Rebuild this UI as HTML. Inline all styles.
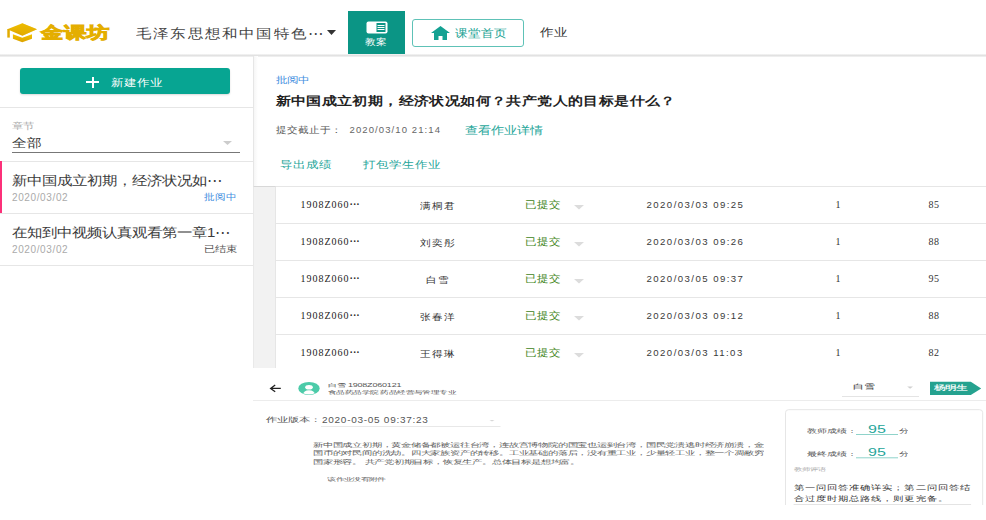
<!DOCTYPE html>
<html><head><meta charset="utf-8">
<style>
*{margin:0;padding:0;box-sizing:border-box}
html,body{width:986px;height:520px;overflow:hidden;background:#fff;font-family:"Liberation Sans",sans-serif;color:#333}
.a{position:absolute;white-space:nowrap;line-height:1}
.hline{position:absolute;height:1px;background:#e6e6e6}
.sq{transform-origin:0 0}
.vline{position:absolute;width:1px;background:#e6e6e6}
</style></head><body>

<!-- HEADER -->
<div class="hline" style="left:0;top:54px;width:986px;height:3px;background:linear-gradient(#f6f6f6,#e2e2e2 50%,#f4f4f4)"></div>
<svg class="a" style="left:0;top:0" width="40" height="50" viewBox="0 0 40 50">
  <defs><linearGradient id="g1" x1="0" y1="0" x2="0" y2="1"><stop offset="0" stop-color="#f2c200"/><stop offset="1" stop-color="#dca200"/></linearGradient></defs>
  <path d="M7.3 29.3 L22.3 23.3 L37 29.3 L22.3 35.8 Z" fill="url(#g1)"/>
  <path d="M22.3 23.3 L37 29.3 L22.3 35.8 L17 28 Z" fill="#e8b400" opacity="0.5"/>
  <rect x="7.3" y="29" width="2.5" height="8.6" fill="#e2ab00"/>
  <path d="M12.9 34.2 L22.3 37.8 L32 34.2 L32 38.7 L22.3 42.2 L12.9 38.7 Z" fill="url(#g1)"/>
</svg>
<div class="a sq" style="left:40.5px;top:24.5px;font-size:22px;font-weight:900;color:#e4ae00;letter-spacing:1.4px;transform:scaleY(0.72);-webkit-text-stroke:1.4px #e4ae00">金课坊</div>
<div class="a sq" style="left:136px;top:26.5px;font-size:15px;color:#444;letter-spacing:2.2px;transform:scaleY(0.84)">毛泽东思想和中国特色⋯</div>
<svg class="a" style="left:327px;top:30px" width="10" height="6"><path d="M0 0 L9 0 L4.5 5 Z" fill="#333"/></svg>

<div class="a" style="left:348px;top:11px;width:57px;height:43px;background:#0b9585"></div>
<svg class="a" style="left:366px;top:21px" width="22" height="13" viewBox="0 0 22 13">
  <rect x="0.5" y="0.5" width="21" height="12" rx="2" fill="#fff"/>
  <rect x="10.5" y="2" width="9" height="9" fill="#0b9585"/>
  <rect x="11.5" y="4" width="7" height="1" fill="#fff"/>
  <rect x="11.5" y="6" width="7" height="1" fill="#fff"/>
  <rect x="11.5" y="8" width="7" height="1" fill="#fff"/>
</svg>
<div class="a sq" style="left:365px;top:36.8px;font-size:11px;color:#fff;transform:scaleY(0.85)">教案</div>

<div class="a" style="left:412px;top:19px;width:112px;height:28px;border:1.5px solid #5ec2b7;border-radius:3px"></div>
<svg class="a" style="left:431px;top:26px" width="19" height="14" viewBox="0 0 19 14">
  <path d="M9.5 0 L19 7 L16 7 L16 14 L11.5 14 L11.5 10 L7.5 10 L7.5 14 L3 14 L3 7 L0 7 Z" fill="#14a192"/>
</svg>
<div class="a sq" style="left:455px;top:26.5px;font-size:13px;color:#14a192;transform:scaleY(0.87)">课堂首页</div>
<div class="a sq" style="left:539.5px;top:26px;font-size:14px;color:#333;transform:scaleY(0.82)">作业</div>

<!-- SIDEBAR -->
<div class="vline" style="left:253px;top:56px;height:312px;background:#e6e6e6"></div><div class="a" style="left:254px;top:56px;width:4px;height:130px;background:linear-gradient(90deg,#f6f6f6,#fff)"></div>
<div class="a" style="left:20px;top:68px;width:210px;height:26px;background:#07a592;border-radius:3px;box-shadow:0 1px 2px rgba(0,0,0,.15)"></div>
<div class="a" style="left:86px;top:81px;width:13px;height:2px;background:#fff"></div>
<div class="a" style="left:91.5px;top:76.5px;width:2px;height:11px;background:#fff"></div>
<div class="a sq" style="left:111px;top:77px;font-size:13px;color:#fff;transform:scaleY(0.8)">新建作业</div>
<div class="hline" style="left:0;top:107px;width:253px"></div>

<div class="a sq" style="left:12px;top:122px;font-size:11px;color:#aaa;transform:scaleY(0.78)">章节</div>
<div class="a sq" style="left:12px;top:135.5px;font-size:15px;color:#333;transform:scaleY(0.82)">全部</div>
<div class="a" style="left:12px;top:152px;width:228px;height:1px;background:#777"></div>
<svg class="a" style="left:223px;top:141px" width="9" height="4"><path d="M0 0 L9 0 L4.5 4 Z" fill="#ccc"/></svg>
<div class="hline" style="left:0;top:161px;width:253px"></div>

<div class="a" style="left:0;top:161px;width:2px;height:52px;background:#fc3079"></div>
<div class="a sq" style="left:12px;top:173.5px;font-size:15px;color:#3a3a3a;letter-spacing:0px;transform:scaleY(0.84)">新中国成立初期，经济状况如⋯</div>
<div class="a" style="left:12px;top:192.5px;font-size:10px;color:#aaa;letter-spacing:0.62px">2020/03/02</div>
<div class="a sq" style="left:204px;top:191.5px;font-size:11px;color:#3f8ee0;transform:scaleY(0.85)">批阅中</div>
<div class="hline" style="left:0;top:213px;width:253px"></div>

<div class="a sq" style="left:12px;top:225.5px;font-size:15px;color:#3a3a3a;letter-spacing:0px;transform:scaleY(0.84)">在知到中视频认真观看第一章1⋯</div>
<div class="a" style="left:12px;top:244.5px;font-size:10px;color:#aaa;letter-spacing:0.62px">2020/03/02</div>
<div class="a sq" style="left:204px;top:244.5px;font-size:11px;color:#555;transform:scaleY(0.8)">已结束</div>
<div class="hline" style="left:0;top:265px;width:253px"></div>

<!-- MAIN -->
<div class="a sq" style="left:275.5px;top:76px;font-size:11px;color:#3f8ee0;transform:scaleY(0.78)">批阅中</div>
<div class="a sq" style="left:275.5px;top:94.5px;font-size:15px;font-weight:bold;color:#222;letter-spacing:0.4px;transform:scaleY(0.8)">新中国成立初期，经济状况如何？共产党人的目标是什么？</div>
<div class="a sq" style="left:275.5px;top:124.8px;font-size:11px;color:#555;transform:scaleY(0.85)">提交截止于：</div>
<div class="a" style="left:349.5px;top:124.5px;font-size:9.5px;color:#666;letter-spacing:1.1px">2020/03/10 21:14</div>
<div class="a sq" style="left:465px;top:124.8px;font-size:13px;color:#26a69a;transform:scaleY(0.84)">查看作业详情</div>
<div class="a sq" style="left:279.5px;top:159.2px;font-size:13px;color:#26a69a;transform:scaleY(0.8)">导出成绩</div>
<div class="a sq" style="left:363px;top:159.2px;font-size:13px;color:#26a69a;transform:scaleY(0.8)">打包学生作业</div>

<div class="a" style="left:253px;top:185.5px;width:23px;height:182.5px;background:#f2f2f2;border-right:1px solid #e6e6e6;border-top:1px solid #d8d8d8;border-left:1px solid #e9e9e9"></div>
<div class="hline" style="left:276px;top:186px;width:710px"></div>
<div class="a" style="left:300.5px;top:200px;font-size:10px;color:#222;font-family:'Liberation Serif',serif;letter-spacing:1px">1908Z060<b style="letter-spacing:0">···</b></div>
<div class="a sq" style="left:398px;top:200.5px;width:80px;text-align:center;font-size:11px;color:#333;letter-spacing:1px;transform:scaleY(0.85)">满桐君</div>
<div class="a sq" style="left:525px;top:200px;font-size:11px;color:#3f8519;letter-spacing:0.8px;transform:scaleY(0.87)">已提交</div>
<svg class="a" style="left:573.5px;top:204.5px" width="10" height="5"><path d="M0 0 L10 0 L5 4.5 Z" fill="#dcdcdc"/></svg>
<div class="a" style="left:646.5px;top:200px;font-size:9.6px;color:#3a3a3a;letter-spacing:1.45px">2020/03/03 09:25</div>
<div class="a" style="left:835.5px;top:200px;font-size:10px;color:#333;font-family:'Liberation Serif',serif">1</div>
<div class="a" style="left:928.5px;top:200px;font-size:10px;color:#333;font-family:'Liberation Serif',serif;letter-spacing:0.5px">85</div>
<div class="hline" style="left:276px;top:223px;width:710px"></div>
<div class="a" style="left:300.5px;top:237px;font-size:10px;color:#222;font-family:'Liberation Serif',serif;letter-spacing:1px">1908Z060<b style="letter-spacing:0">···</b></div>
<div class="a sq" style="left:398px;top:237.5px;width:80px;text-align:center;font-size:11px;color:#333;letter-spacing:1px;transform:scaleY(0.85)">刘奕彤</div>
<div class="a sq" style="left:525px;top:237px;font-size:11px;color:#3f8519;letter-spacing:0.8px;transform:scaleY(0.87)">已提交</div>
<svg class="a" style="left:573.5px;top:241.5px" width="10" height="5"><path d="M0 0 L10 0 L5 4.5 Z" fill="#dcdcdc"/></svg>
<div class="a" style="left:646.5px;top:237px;font-size:9.6px;color:#3a3a3a;letter-spacing:1.45px">2020/03/03 09:26</div>
<div class="a" style="left:835.5px;top:237px;font-size:10px;color:#333;font-family:'Liberation Serif',serif">1</div>
<div class="a" style="left:928.5px;top:237px;font-size:10px;color:#333;font-family:'Liberation Serif',serif;letter-spacing:0.5px">88</div>
<div class="hline" style="left:276px;top:260px;width:710px"></div>
<div class="a" style="left:300.5px;top:274px;font-size:10px;color:#222;font-family:'Liberation Serif',serif;letter-spacing:1px">1908Z060<b style="letter-spacing:0">···</b></div>
<div class="a sq" style="left:398px;top:274.5px;width:80px;text-align:center;font-size:11px;color:#333;letter-spacing:1px;transform:scaleY(0.85)">白雪</div>
<div class="a sq" style="left:525px;top:274px;font-size:11px;color:#3f8519;letter-spacing:0.8px;transform:scaleY(0.87)">已提交</div>
<svg class="a" style="left:573.5px;top:278.5px" width="10" height="5"><path d="M0 0 L10 0 L5 4.5 Z" fill="#dcdcdc"/></svg>
<div class="a" style="left:646.5px;top:274px;font-size:9.6px;color:#3a3a3a;letter-spacing:1.45px">2020/03/05 09:37</div>
<div class="a" style="left:835.5px;top:274px;font-size:10px;color:#333;font-family:'Liberation Serif',serif">1</div>
<div class="a" style="left:928.5px;top:274px;font-size:10px;color:#333;font-family:'Liberation Serif',serif;letter-spacing:0.5px">95</div>
<div class="hline" style="left:276px;top:297px;width:710px"></div>
<div class="a" style="left:300.5px;top:311px;font-size:10px;color:#222;font-family:'Liberation Serif',serif;letter-spacing:1px">1908Z060<b style="letter-spacing:0">···</b></div>
<div class="a sq" style="left:398px;top:311.5px;width:80px;text-align:center;font-size:11px;color:#333;letter-spacing:1px;transform:scaleY(0.85)">张春洋</div>
<div class="a sq" style="left:525px;top:311px;font-size:11px;color:#3f8519;letter-spacing:0.8px;transform:scaleY(0.87)">已提交</div>
<svg class="a" style="left:573.5px;top:315.5px" width="10" height="5"><path d="M0 0 L10 0 L5 4.5 Z" fill="#dcdcdc"/></svg>
<div class="a" style="left:646.5px;top:311px;font-size:9.6px;color:#3a3a3a;letter-spacing:1.45px">2020/03/03 09:12</div>
<div class="a" style="left:835.5px;top:311px;font-size:10px;color:#333;font-family:'Liberation Serif',serif">1</div>
<div class="a" style="left:928.5px;top:311px;font-size:10px;color:#333;font-family:'Liberation Serif',serif;letter-spacing:0.5px">88</div>
<div class="hline" style="left:276px;top:334px;width:710px"></div>
<div class="a" style="left:300.5px;top:348px;font-size:10px;color:#222;font-family:'Liberation Serif',serif;letter-spacing:1px">1908Z060<b style="letter-spacing:0">···</b></div>
<div class="a sq" style="left:398px;top:348.5px;width:80px;text-align:center;font-size:11px;color:#333;letter-spacing:1px;transform:scaleY(0.85)">王得琳</div>
<div class="a sq" style="left:525px;top:348px;font-size:11px;color:#3f8519;letter-spacing:0.8px;transform:scaleY(0.87)">已提交</div>
<svg class="a" style="left:573.5px;top:352.5px" width="10" height="5"><path d="M0 0 L10 0 L5 4.5 Z" fill="#dcdcdc"/></svg>
<div class="a" style="left:646.5px;top:348px;font-size:9.6px;color:#3a3a3a;letter-spacing:1.45px">2020/03/03 11:03</div>
<div class="a" style="left:835.5px;top:348px;font-size:10px;color:#333;font-family:'Liberation Serif',serif">1</div>
<div class="a" style="left:928.5px;top:348px;font-size:10px;color:#333;font-family:'Liberation Serif',serif;letter-spacing:0.5px">82</div>

<!-- BOTTOM PANEL -->
<div class="a" style="left:253px;top:368px;width:733px;height:152px;background:#fff"></div>
<svg class="a" style="left:0;top:0" width="986" height="520">
  <path d="M280.8 388.4 L270.6 388.4 M275.2 384.9 L270.6 388.4 L275.2 391.8" stroke="#222" stroke-width="1.3" fill="none"/>
  <ellipse cx="309" cy="388.4" rx="10.7" ry="6.5" fill="#4ccba9"/>
  <clipPath id="av"><ellipse cx="309" cy="388.4" rx="10" ry="6"/></clipPath>
  <g clip-path="url(#av)" fill="#fff">
    <ellipse cx="309" cy="387.3" rx="3.8" ry="2.3"/>
    <path d="M302.5 396 Q303 390.2 309 390.2 Q315 390.2 315.5 396 Z"/>
  </g>
  <rect x="253" y="400" width="733" height="1" fill="#ececec"/>
  <rect x="842" y="396" width="77" height="1" fill="#e4e4e4"/>
  <path d="M907.2 386.6 L913 386.6 L910.1 388.8 Z" fill="#d0d0d0"/>
  <path d="M930 381.8 L970.8 381.8 L981.2 388.4 L970.8 395 L930 395 Z" fill="#25a28f"/>
  <rect x="321" y="426" width="179.5" height="1" fill="#e8e8e8"/>
  <path d="M489.5 420 L494.5 420 L492 421.6 Z" fill="#d8d8d8"/>
  <path d="M785.5 505 L785.5 412.7 Q785.5 409.7 788.5 409.7 L979.7 409.7 Q982.7 409.7 982.7 412.7 L982.7 505" stroke="#e6e6e6" stroke-width="1" fill="none"/>
  <rect x="856" y="434" width="42" height="1" fill="#8fd3ca"/>
  <rect x="856" y="457.3" width="42" height="1" fill="#8fd3ca"/>
  <rect x="793.6" y="504" width="177.5" height="1" fill="#e4e4e4"/>
</svg>
<div class="a sq" style="left:328px;top:383px;font-size:9px;letter-spacing:-0.2px;color:#555;transform:scaleY(0.55)">白雪 1908Z060121</div>
<div class="a sq" style="left:328px;top:389.6px;font-size:9px;letter-spacing:-0.6px;color:#555;transform:scaleY(0.58)">食品药品学院 药品经营与管理专业</div>
<div class="a sq" style="left:852.5px;top:383px;font-size:11px;color:#333;transform:scaleY(0.64)">白雪</div>
<div class="a sq" style="left:934px;top:385px;font-size:11px;color:#fff;-webkit-text-stroke:0.25px #fff;transform:scaleY(0.6)">杨明生</div>
<div class="a sq" style="left:265.5px;top:416.3px;font-size:11.2px;color:#555;transform:scaleY(0.62)">作业版本：</div>
<div class="a sq" style="left:322px;top:414.8px;font-size:10px;color:#555;letter-spacing:0.72px;transform:scaleY(0.95)">2020-03-05 09:37:23</div>
<div class="a sq" style="left:313px;top:441.5px;font-size:10px;letter-spacing:-0.21px;color:#5a5a5a;transform:scaleY(0.58)">新中国成立初期，黄金储备都被运往台湾，连故宫博物院的国宝也运到台湾，国民党溃逃时经济崩溃，金</div>
<div class="a sq" style="left:313px;top:450.2px;font-size:10px;letter-spacing:-0.21px;color:#5a5a5a;transform:scaleY(0.58)">国币的对民间的洗劫。四大家族资产的转移。工业基础的落后，没有重工业，少量轻工业，整一个凋敝穷</div>
<div class="a sq" style="left:313px;top:458.9px;font-size:10px;letter-spacing:-0.21px;color:#5a5a5a;transform:scaleY(0.58)">国家形容。 共产党初期目标，恢复生产。总体目标是想均富。</div>
<div class="a sq" style="left:327.4px;top:477px;font-size:9px;letter-spacing:-0.7px;color:#666;transform:scaleY(0.56)">该作业没有附件</div>
<div class="a sq" style="left:807px;top:427.5px;font-size:10px;color:#555;transform:scaleY(0.6)">教师成绩：</div>
<div class="a sq" style="left:868px;top:423.5px;font-size:16px;color:#26a69a;transform:scaleY(0.7)">95</div>
<div class="a sq" style="left:898.5px;top:427.5px;font-size:9.4px;color:#555;transform:scaleY(0.6)">分</div>
<div class="a sq" style="left:807px;top:450.5px;font-size:10px;color:#555;transform:scaleY(0.6)">最终成绩：</div>
<div class="a sq" style="left:868px;top:446.8px;font-size:16px;color:#26a69a;transform:scaleY(0.7)">95</div>
<div class="a sq" style="left:898.5px;top:450.5px;font-size:9.4px;color:#555;transform:scaleY(0.6)">分</div>
<div class="a sq" style="left:793.5px;top:467.3px;font-size:8.2px;color:#aaa;transform:scaleY(0.6)">教师评语</div>
<div class="a sq" style="left:793.5px;top:484px;font-size:11px;letter-spacing:0.1px;color:#333;transform:scaleY(0.68)">第一问回答准确详实；第二问回答结</div>
<div class="a sq" style="left:793.5px;top:494.5px;font-size:11px;letter-spacing:0.1px;color:#333;transform:scaleY(0.68)">合过度时期总路线，则更完备。</div>

</body></html>
